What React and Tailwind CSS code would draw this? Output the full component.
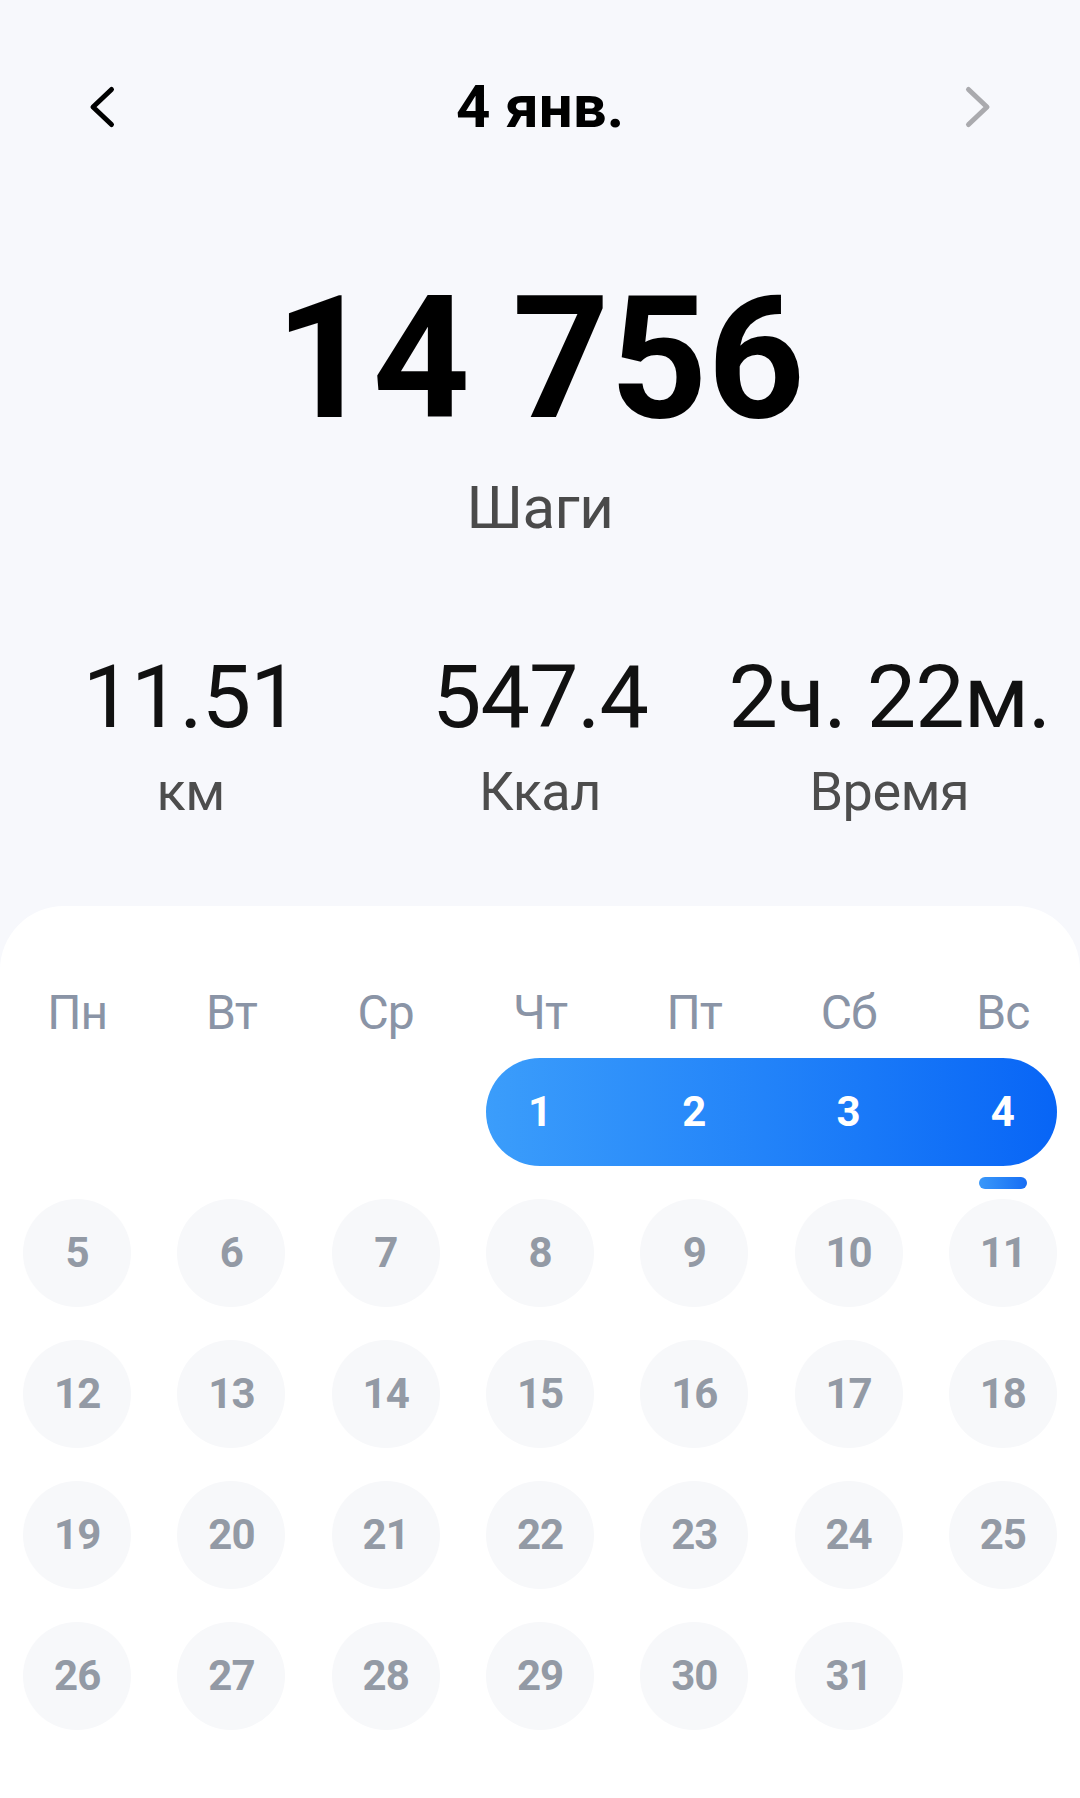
const weekDays = ["Пн", "Вт", "Ср", "Чт", "Пт", "Сб", "Вс"];

const stats = [
  { value: "11.51", label: "км" },
  { value: "547.4", label: "Ккал" },
  { value: "2ч. 22м.", label: "Время" },
];

// days after the first (partial) week
const restDays = Array.from({ length: 27 }, (_, i) => i + 5);

function Chevron({ dir, color }) {
  const d = dir === "left" ? "M23.5 4.5 L5 22 L23.5 39.5" : "M6.5 4.5 L25 22 L6.5 39.5";
  return (
    <svg width="30" height="44" viewBox="0 0 30 44" fill="none">
      <path d={d} stroke={color} strokeWidth="5" strokeLinecap="round" strokeLinejoin="round" />
    </svg>
  );
}

export default function App() {
  return (
    <div
      className="min-h-screen w-[1080px] bg-[#f7f8fc] flex flex-col"
      style={{ fontFamily: "Roboto, 'Noto Sans', sans-serif" }}
    >
      {/* Header */}
      <div className="mt-[77px] h-[60px] flex items-center justify-between pl-[88px] pr-[88px]">
        <Chevron dir="left" color="#000000" />
        <h1 className="text-[60px] leading-none font-bold text-black">4 янв.</h1>
        <Chevron dir="right" color="#aaaaae" />
      </div>

      {/* Steps */}
      <div className="mt-[137px] flex flex-col items-center">
        <div className="text-[170px] leading-none font-bold text-black">14 756</div>
        <div className="mt-[34px] text-[60px] leading-none text-[#4a4a4a] tracking-[-0.5px]">Шаги</div>
      </div>

      {/* Stats */}
      <div className="mt-[115px] grid grid-cols-3 px-[16px]">
        {stats.map((s) => (
          <div key={s.label} className="flex flex-col items-center">
            <div className="text-[88px] leading-none text-[#111111] tracking-[-1px]">{s.value}</div>
            <div className="mt-[24px] text-[54px] leading-none text-[#4d4d4d] tracking-[-0.5px]">{s.label}</div>
          </div>
        ))}
      </div>

      {/* Calendar */}
      <div className="mt-[87px] flex-1 bg-white rounded-t-[64px] pt-[83px] pb-[60px]">
        <div className="grid grid-cols-7">
          {weekDays.map((d) => (
            <div key={d} className="text-center text-[48px] leading-none text-[#8a94a6] tracking-[-1px]">
              {d}
            </div>
          ))}
        </div>

        <div className="mt-[21px] grid grid-cols-7 gap-y-[33px]">
          {/* first week: 1-4 highlighted */}
          <div className="col-start-4 col-span-4 mx-[23px] h-[108px] rounded-full bg-gradient-to-r from-[#3b9dfb] to-[#0865f6]">
            <div className="-mx-[23px] grid grid-cols-4 h-full">
              {[1, 2, 3, 4].map((n) => (
                <div key={n} className="relative flex items-center justify-center">
                  <span className="text-[42px] leading-none font-bold text-white">{n}</span>
                  {n === 4 && (
                    <div className="absolute left-1/2 -translate-x-1/2 top-[119px] w-[48px] h-[12px] rounded-full bg-gradient-to-r from-[#3a98f9] to-[#176df4]" />
                  )}
                </div>
              ))}
            </div>
          </div>

          {restDays.map((n) => (
            <div key={n} className="flex justify-center">
              <div className="w-[108px] h-[108px] rounded-full bg-[#f7f8fa] flex items-center justify-center">
                <span className="text-[42px] leading-none font-bold text-[#939aa5] tracking-[-1px]">{n}</span>
              </div>
            </div>
          ))}
        </div>
      </div>
    </div>
  );
}
